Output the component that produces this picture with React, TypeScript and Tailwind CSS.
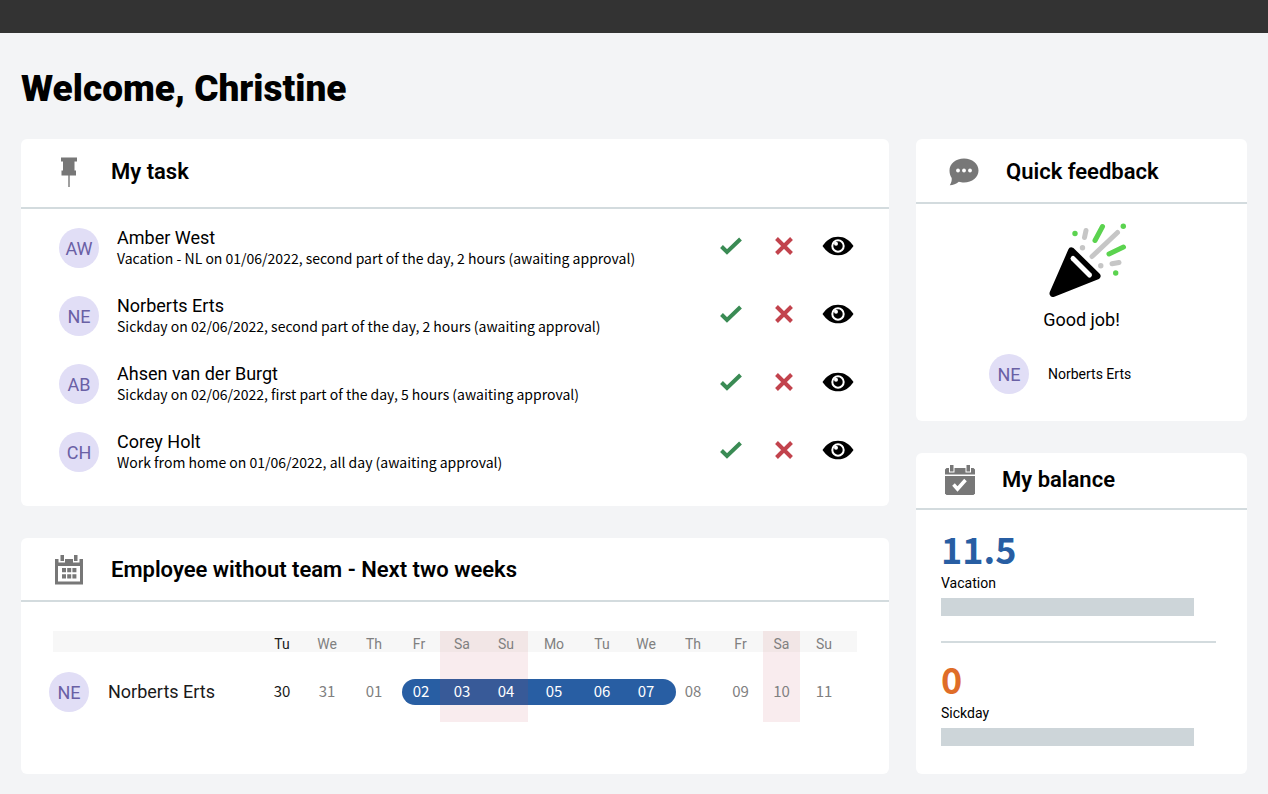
import type { ReactNode } from 'react';
import clsx from 'clsx';

interface Task {
  id: number;
  initials: string;
  name: string;
  description: string;
}

interface Day {
  weekday: string;
  date: string;
  width: string;
  today?: boolean;
  weekend?: boolean;
  leave?: 'start' | 'middle' | 'end';
}

const tasks: Task[] = [
  { id: 1, initials: 'AW', name: 'Amber West', description: 'Vacation - NL on 01/06/2022, second part of the day, 2 hours (awaiting approval)' },
  { id: 2, initials: 'NE', name: 'Norberts Erts', description: 'Sickday on 02/06/2022, second part of the day, 2 hours (awaiting approval)' },
  { id: 3, initials: 'AB', name: 'Ahsen van der Burgt', description: 'Sickday on 02/06/2022, first part of the day, 5 hours (awaiting approval)' },
  { id: 4, initials: 'CH', name: 'Corey Holt', description: 'Work from home on 01/06/2022, all day (awaiting approval)' },
];

const days: Day[] = [
  { weekday: 'Tu', date: '30', width: 'w-[44px]', today: true },
  { weekday: 'We', date: '31', width: 'w-[46px]' },
  { weekday: 'Th', date: '01', width: 'w-[48px]' },
  { weekday: 'Fr', date: '02', width: 'w-[42px]', leave: 'start' },
  { weekday: 'Sa', date: '03', width: 'w-[44px]', weekend: true, leave: 'middle' },
  { weekday: 'Su', date: '04', width: 'w-[44px]', weekend: true, leave: 'middle' },
  { weekday: 'Mo', date: '05', width: 'w-[52px]', leave: 'middle' },
  { weekday: 'Tu', date: '06', width: 'w-[44px]', leave: 'middle' },
  { weekday: 'We', date: '07', width: 'w-[44px]', leave: 'end' },
  { weekday: 'Th', date: '08', width: 'w-[50px]' },
  { weekday: 'Fr', date: '09', width: 'w-[45px]' },
  { weekday: 'Sa', date: '10', width: 'w-[37px]', weekend: true },
  { weekday: 'Su', date: '11', width: 'w-[48px]' },
];

function PinIcon() {
  return (
    <svg className="w-4 h-[31px]" viewBox="0 0 16 31" fill="#777777">
      <path d="M0 .5h16v4h-2.500v9h1.500v5H8.700V30H7.300V18.500H.5v-5H2v-9H0z" />
    </svg>
  );
}

function CommentIcon() {
  return (
    <svg className="w-[30px] h-7" viewBox="0 0 30 28">
      <path
        fill="#777777"
        d="M15 .5C23.300.5 29.500 5.800 29.500 12.500S23.300 24.500 15 24.500c-2 0-3.500-.1-5.200-.7C7.300 26 4 27.200.8 27.300c1.400-2.300 2.200-4.500 1.900-7.300C1.200 17.800.5 15.300.5 12.500.5 5.800 6.700.5 15 .5z"
      />
      <circle cx="9" cy="12.500" r="1.900" fill="#fff" />
      <circle cx="15" cy="12.500" r="1.900" fill="#fff" />
      <circle cx="21" cy="12.500" r="1.900" fill="#fff" />
    </svg>
  );
}

function CalendarIcon() {
  return (
    <svg className="w-[30px] h-[30px]" viewBox="0 0 30 30" fill="#777777">
      <path fillRule="evenodd" d="M1 4h3.500v3.500H11V4h8v3.500h6.500V4H29v25.500H1zM4 11v15.500h22V11z" />
      <path d="M6.500 0h3.500v6H6.500zM20 0h3.500v6H20z" />
      <path d="M8 13h4v4.200H8zM13.200 13h4v4.200h-4zM18.400 13h4v4.200h-4zM8 19.300h4v4.200H8zM13.200 19.300h4v4.200h-4zM18.400 19.300h4v4.200h-4z" />
    </svg>
  );
}

function CalendarCheckIcon() {
  return (
    <svg className="w-[30px] h-[30px]" viewBox="0 0 30 30" fill="#777777">
      <path d="M1.500 3H4v4.500h5.500V3h11v4.500H26V3h2.500L30 4.500V9.500H0V4.500z" />
      <path d="M5 0h3.500v6.500H5zM21.500 0H25v6.500h-3.500z" />
      <path d="M0 11h30v17.500L28.500 30h-27L0 28.500z" />
      <path d="M8.500 19.500l4 4.500 8-9" fill="none" stroke="#fff" strokeWidth="3.500" />
    </svg>
  );
}

function CheckIcon() {
  return (
    <svg className="w-[22px] h-[18px]" viewBox="0 0 22 18" fill="none">
      <path d="M1.500 9.500l5.500 5.500L20.500 2" stroke="#3a8b54" strokeWidth="4" />
    </svg>
  );
}

function CrossIcon() {
  return (
    <svg className="w-[18px] h-[18px]" viewBox="0 0 18 18" fill="none">
      <path d="M1.500 1.500l15 15M16.500 1.500l-15 15" stroke="#c2434d" strokeWidth="4" />
    </svg>
  );
}

function EyeIcon() {
  return (
    <svg className="w-8 h-5" viewBox="0 0 32 20">
      <path d="M.5 10C4.500 4 9.500.7 16 .7S27.500 4 31.500 10C27.500 16 22.500 19.300 16 19.300S4.500 16 .5 10z" />
      <circle cx="16" cy="10" r="5.700" stroke="#fff" strokeWidth="2" />
      <circle cx="14" cy="7.800" r="2" fill="#fff" />
    </svg>
  );
}

function PartyPopper() {
  return (
    <svg className="w-[90px] h-[78px]" viewBox="0 0 90 78" strokeLinecap="round" strokeLinejoin="round" fill="none">
      <path d="M34.500 29L60 54 16 71.500z" fill="#000" stroke="#000" strokeWidth="7" />
      <path d="M36 36.500l16.500 16.500" stroke="#fff" strokeWidth="5" />
      <g stroke="#c6c6c6" strokeWidth="5">
        <path d="M55 34.500L80.500 10.500M47.500 15.500l1.500-7M75 41.800l7-1.300" />
      </g>
      <g stroke="#5bd34f" strokeWidth="5">
        <path d="M58 18.500L65.500 4.500M72 32l14.500-7" />
      </g>
      <g fill="#5bd34f">
        <circle cx="38" cy="11.500" r="2.700" />
        <circle cx="86.300" cy="4.200" r="2.700" />
        <circle cx="78.700" cy="51" r="2.700" />
      </g>
      <g fill="#c6c6c6">
        <circle cx="45.500" cy="25.800" r="2.700" />
        <circle cx="63.800" cy="43.800" r="2.700" />
      </g>
    </svg>
  );
}

function Avatar({ initials }: { initials: string }) {
  return (
    <div className="w-10 h-10 pt-px shrink-0 rounded-full bg-[#e1def6] text-[#6a60a5] text-lg flex items-center justify-center">
      {initials}
    </div>
  );
}

function CardHeader({ icon, title, className }: { icon: ReactNode; title: string; className: string }) {
  return (
    <div className={clsx('flex items-center gap-[26px] border-b-2 border-[#d3dbde]', className)}>
      <div className="w-8 flex justify-center shrink-0">{icon}</div>
      <h2 className="text-[22px] leading-7 font-semibold text-black">{title}</h2>
    </div>
  );
}

function Balance({ amount, label, color }: { amount: string; label: string; color: string }) {
  return (
    <div>
      <div className={clsx("font-['Noto_Sans_CJK_JP',sans-serif] font-bold text-4xl leading-[33px]", color)}>{amount}</div>
      <div className="mt-[7px] text-sm leading-[22px]">{label}</div>
      <div className="mt-1 mr-[53px] h-[18px] bg-[#cdd5d9]" />
    </div>
  );
}

export default function App() {
  return (
    <div className="min-h-screen bg-gray-100 text-black font-['Roboto',sans-serif]">
      <div className="h-[33px] bg-[#333333]" />

      <main className="px-[21px] pb-5">
        <h1 className="pt-[34px] pb-7 text-[37px] leading-11 font-black">Welcome, Christine</h1>

        <div className="grid grid-cols-[868fr_331fr] gap-[27px]">
          <div className="flex flex-col gap-8">
            {/* Tasks */}
            <section className="bg-white rounded-md">
              <CardHeader icon={<PinIcon />} title="My task" className="h-[70px] pl-8 pb-0.5" />
              <ul className="pt-[18px] pb-[33px] pl-[38px] pr-[35px] flex flex-col gap-[26px]">
                {tasks.map((task) => (
                  <li key={task.id} className="flex items-center">
                    <Avatar initials={task.initials} />
                    <div className="ml-[18px] flex-1">
                      <div className="text-lg leading-[21px]">{task.name}</div>
                      <div className="text-sm leading-[21px] font-['Noto_Sans_CJK_JP',sans-serif]">{task.description}</div>
                    </div>
                    <div className="flex items-center pb-1">
                      <button type="button" aria-label="Approve" className="mr-[33px]">
                        <CheckIcon />
                      </button>
                      <button type="button" aria-label="Reject" className="mr-[29px]">
                        <CrossIcon />
                      </button>
                      <button type="button" aria-label="View">
                        <EyeIcon />
                      </button>
                    </div>
                  </li>
                ))}
              </ul>
            </section>

            {/* Team calendar */}
            <section className="bg-white rounded-md">
              <CardHeader icon={<CalendarIcon />} title="Employee without team - Next two weeks" className="h-16 pl-8 pt-0.5" />
              <div className="pt-[29px] pb-[52px] px-8">
                <table className="w-full table-fixed text-sm text-center text-[#808080]">
                  <thead>
                    <tr className="h-[21px] bg-[#f7f7f7]">
                      <th aria-label="Employee" />
                      {days.map((day) => (
                        <th
                          key={day.date}
                          className={clsx(
                            'p-0 pt-[5px] leading-4 font-normal',
                            day.width,
                            day.today && 'text-[#1a1a1a]',
                            day.weekend && 'bg-[#f2e6e6]'
                          )}
                        >
                          {day.weekday}
                        </th>
                      ))}
                      <th className="w-[9px] p-0" />
                    </tr>
                  </thead>
                  <tbody>
                    <tr className="h-[70px]">
                      <td className="p-0 pt-[10px]">
                        <div className="-ml-1 flex items-center gap-[19px] text-lg text-[#1a1a1a]">
                          <Avatar initials="NE" />
                          Norberts Erts
                        </div>
                      </td>
                      {days.map((day) => (
                        <td
                          key={day.date}
                          className={clsx(
                            "p-0 pt-[10px] font-['Noto_Sans_CJK_JP',sans-serif] text-[15px]",
                            day.today && 'text-[#1a1a1a]',
                            day.weekend && 'bg-[#f9ecee]'
                          )}
                        >
                          <div
                            className={clsx(
                              'h-[26px] leading-6',
                              day.leave && 'text-white',
                              day.leave && (day.weekend ? 'bg-[#385a98]' : 'bg-[#285ea3]'),
                              day.leave === 'start' && 'ml-1 rounded-l-full',
                              day.leave === 'end' && '-mr-2 pr-2 rounded-r-full'
                            )}
                          >
                            {day.date}
                          </div>
                        </td>
                      ))}
                      <td className="p-0" />
                    </tr>
                  </tbody>
                </table>
              </div>
            </section>
          </div>

          <div className="flex flex-col gap-8">
            {/* Feedback */}
            <section className="bg-white rounded-md">
              <CardHeader icon={<CommentIcon />} title="Quick feedback" className="h-[65px] pl-8 pt-0.5" />
              <div className="pt-[18px] pb-[27px]">
                <div className="flex flex-col items-center">
                  <PartyPopper />
                  <p className="mt-2 text-lg leading-6">Good job!</p>
                </div>
                <div className="mt-[22px] ml-[73px] flex items-center gap-[19px] text-sm">
                  <Avatar initials="NE" />
                  Norberts Erts
                </div>
              </div>
            </section>

            {/* Balance */}
            <section className="bg-white rounded-md">
              <CardHeader icon={<CalendarCheckIcon />} title="My balance" className="h-[57px] pl-7 pb-0.5" />
              <div className="pt-[22px] pb-7 pl-[25px]">
                <Balance amount="11.5" label="Vacation" color="text-[#285ea3]" />
                <hr className="mt-[25px] mb-[19px] mr-[31px] border-t-2 border-[#d3dbde]" />
                <Balance amount="0" label="Sickday" color="text-[#df6d28]" />
              </div>
            </section>
          </div>
        </div>
      </main>
    </div>
  );
}
